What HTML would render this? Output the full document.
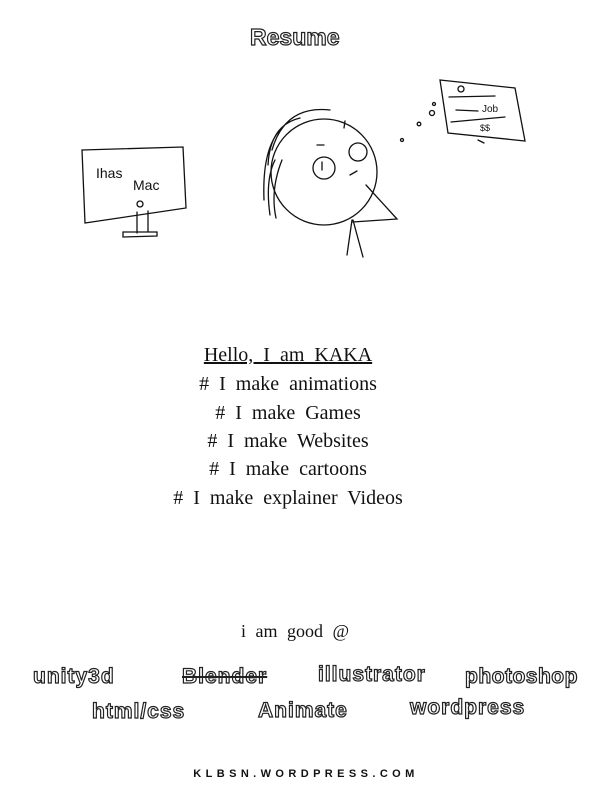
<!DOCTYPE html>
<html><head><meta charset="utf-8"><style>
html,body{margin:0;padding:0;background:#fff;}
body{width:612px;height:792px;position:relative;overflow:hidden;font-family:"Liberation Serif",serif;color:#111;}
.t{position:absolute;left:0;width:576px;text-align:center;font-size:20px;word-spacing:5px;line-height:24px;}
.o{position:absolute;font-family:"Liberation Sans",sans-serif;font-weight:bold;color:#fff;-webkit-text-stroke:1.2px #222;white-space:nowrap;font-size:21px;letter-spacing:1px;}
</style></head><body>
<div class="o" style="left:250px;top:24px;font-size:23px;letter-spacing:0">Resume</div>
<svg width="612" height="300" style="position:absolute;left:0;top:0" fill="none" stroke="#111" stroke-width="1.3" stroke-linecap="round">
<path d="M82 150 L183 147 L186 208 L85 223 Z"/>
<path d="M137 212 L137 233 M148 211 L148 232 M123 232 L157 232 L157 236 L123 237 Z"/>
<text x="96" y="178" font-family="Liberation Sans" font-size="14" fill="#111" stroke="none">Ihas</text>
<text x="133" y="190" font-family="Liberation Sans" font-size="14" fill="#111" stroke="none">Mac</text>
<circle cx="140" cy="204" r="3"/>
<circle cx="324" cy="172" r="53"/>
<path d="M272 150 Q285 105 330 110 M268 165 Q270 125 300 118 M264 200 Q262 150 280 130 M270 215 Q265 180 275 160 M276 218 Q270 190 282 160"/>
<circle cx="324" cy="168" r="11"/><circle cx="358" cy="152" r="9"/>
<path d="M322 162 L322 170 M317 145 L324 145 M345 121 L344 128 M350 175 L357 171"/>
<path d="M366 185 L397 219 L353 222 M352 220 L347 255 M353 220 L363 257"/>
<circle cx="402" cy="140" r="1.5"/><circle cx="419" cy="124" r="1.8"/><circle cx="432" cy="113" r="2.5"/><circle cx="434" cy="104" r="1.5"/>
<path d="M440 80 L515 88 L525 141 L448 133 Z M449 97 L495 96 M456 110 L478 111 M451 122 L505 117 M478 140 L484 143"/>
<circle cx="461" cy="89" r="3"/>
<text x="482" y="112" font-family="Liberation Sans" font-size="10" fill="#111" stroke="none">Job</text>
<text x="480" y="131" font-family="Liberation Sans" font-size="9" fill="#111" stroke="none">$$</text>
</svg>
<div class="t" style="top:343px;"><span style="text-decoration:underline">Hello, I am KAKA</span></div>
<div class="t" style="top:372px;">#&nbsp;I make animations</div>
<div class="t" style="top:401px;">#&nbsp;I make Games</div>
<div class="t" style="top:429px;">#&nbsp;I make Websites</div>
<div class="t" style="top:457px;">#&nbsp;I make cartoons</div>
<div class="t" style="top:486px;">#&nbsp;I make explainer Videos</div>
<div class="t" style="top:619px;left:0;width:590px;font-size:18px;">i am good @</div>
<div class="o" style="left:33px;top:665px;">unity3d</div>
<div class="o" style="left:182px;top:665px;text-decoration:line-through;text-decoration-color:#222;">Blender</div>
<div class="o" style="left:318px;top:663px;">illustrator</div>
<div class="o" style="left:465px;top:665px;letter-spacing:0.5px">photoshop</div>
<div class="o" style="left:92px;top:700px;">html/css</div>
<div class="o" style="left:258px;top:699px;">Animate</div>
<div class="o" style="left:410px;top:696px;">wordpress</div>
<div style="position:absolute;left:0;width:612px;text-align:center;top:768px;font-family:'Liberation Sans',sans-serif;font-weight:bold;font-size:11px;letter-spacing:4.4px;">KLBSN.WORDPRESS.COM</div>
</body></html>
